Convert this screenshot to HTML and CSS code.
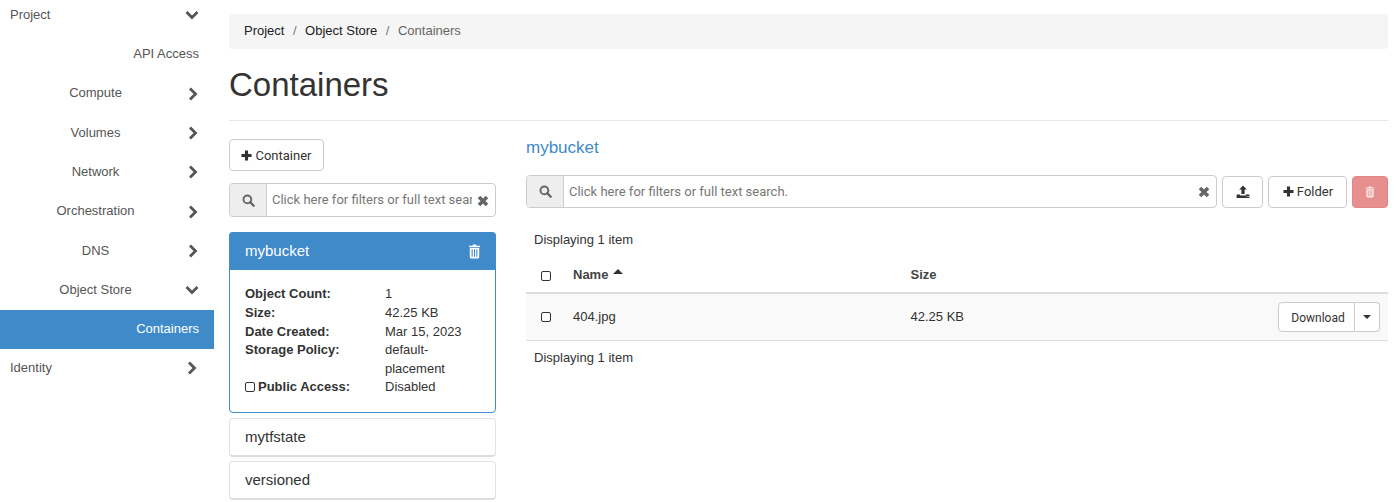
FILE: index.html
```html
<!DOCTYPE html>
<html lang="en">
<head>
  <meta charset="UTF-8">
  <title>Containers</title>
  <link rel="stylesheet" href="styles.css">
</head>
<body>
  <svg class="sprites" width="0" height="0">
    <symbol id="i-chev-right" viewBox="0 0 12 14"><path d="M3 1.5 8.5 7 3 12.5" fill="none" stroke="currentColor" stroke-width="2.8"/></symbol>
    <symbol id="i-chev-down" viewBox="0 0 14 12"><path d="M1.5 3 7 8.5 12.5 3" fill="none" stroke="currentColor" stroke-width="2.8"/></symbol>
    <symbol id="i-search" viewBox="0 0 14 14"><circle cx="5.8" cy="5.8" r="4.2" fill="none" stroke="currentColor" stroke-width="2.1"/><path d="M8.8 8.8 12.6 12.6" stroke="currentColor" stroke-width="2.5" stroke-linecap="round"/></symbol>
    <symbol id="i-times" viewBox="0 0 12 12"><path d="M2 2 10 10M10 2 2 10" stroke="currentColor" stroke-width="3.6"/></symbol>
    <symbol id="i-plus" viewBox="0 0 12 12"><path d="M6 .5V11.500M.5 6H11.500" stroke="currentColor" stroke-width="3.4"/></symbol>
    <symbol id="i-trash" viewBox="0 0 12 14"><path fill="currentColor" fill-rule="evenodd" d="M4 1.6 4.7.5h2.600L8 1.600h3.200v1.300H.8V1.600zM1.600 3.600h8.800v8.600c0 .8-.6 1.300-1.300 1.300H2.900c-.7 0-1.300-.5-1.300-1.300zM3.300 5v7h1V5zm2.200 0v7h1V5zm2.200 0v7h1V5z"/></symbol>
    <symbol id="i-upload" viewBox="0 0 14 14"><path fill="currentColor" fill-rule="evenodd" d="M7 .5 10.800 4.600H8.600V9H5.400V4.600H3.200zM.6 9.600h3.600V10.600h5.600V9.600h3.600V13H.6zM10.600 11v1h.8v-1zm1.300 0v1h.7v-1z"/></symbol>
  </svg>

  <nav class="sidebar">
    <a class="nav-top"><span>Project</span><svg class="chev-down"><use href="#i-chev-down"/></svg></a>
    <a class="nav-leaf">API Access</a>
    <a class="nav-sub"><span>Compute</span><svg class="chev"><use href="#i-chev-right"/></svg></a>
    <a class="nav-sub"><span>Volumes</span><svg class="chev"><use href="#i-chev-right"/></svg></a>
    <a class="nav-sub"><span>Network</span><svg class="chev"><use href="#i-chev-right"/></svg></a>
    <a class="nav-sub"><span>Orchestration</span><svg class="chev"><use href="#i-chev-right"/></svg></a>
    <a class="nav-sub"><span>DNS</span><svg class="chev"><use href="#i-chev-right"/></svg></a>
    <a class="nav-sub"><span>Object Store</span><svg class="chev-down"><use href="#i-chev-down"/></svg></a>
    <a class="nav-leaf active">Containers</a>
    <a class="nav-top"><span>Identity</span><svg class="chev"><use href="#i-chev-right"/></svg></a>
  </nav>

  <main class="content">
    <ol class="breadcrumb">
      <li>Project</li>
      <li class="sep">/</li>
      <li>Object Store</li>
      <li class="sep">/</li>
      <li class="current">Containers</li>
    </ol>
    <h1>Containers</h1>
    <hr>

    <div class="columns">
      <section class="left-col">
        <button class="btn btn-add"><svg class="ic-plus"><use href="#i-plus"/></svg>Container</button>
        <div class="search search-left">
          <span class="search-addon"><svg class="ic-search"><use href="#i-search"/></svg></span>
          <span class="search-field"><span class="search-text">Click here for filters or full text search.</span></span>
          <svg class="ic-times"><use href="#i-times"/></svg>
        </div>

        <div class="panel panel-active">
          <div class="panel-head"><span>mybucket</span><svg class="ic-trash"><use href="#i-trash"/></svg></div>
          <dl class="details">
            <dt>Object Count:</dt><dd>1</dd>
            <dt>Size:</dt><dd>42.25 KB</dd>
            <dt>Date Created:</dt><dd>Mar 15, 2023</dd>
            <dt>Storage Policy:</dt><dd>default-placement</dd>
            <dt class="public"><span class="check"></span>Public Access:</dt><dd>Disabled</dd>
          </dl>
        </div>
        <div class="panel panel-closed">mytfstate</div>
        <div class="panel panel-closed">versioned</div>
      </section>

      <section class="right-col">
        <a class="bucket-link">mybucket</a>
        <div class="toolbar">
          <div class="search search-right">
            <span class="search-addon"><svg class="ic-search"><use href="#i-search"/></svg></span>
            <span class="search-field"><span class="search-text">Click here for filters or full text search.</span></span>
            <svg class="ic-times"><use href="#i-times"/></svg>
          </div>
          <button class="btn btn-upload"><svg class="ic-upload"><use href="#i-upload"/></svg></button>
          <button class="btn btn-folder"><svg class="ic-plus"><use href="#i-plus"/></svg>Folder</button>
          <button class="btn btn-delete"><svg class="ic-trash-sm"><use href="#i-trash"/></svg></button>
        </div>

        <p class="count count-top">Displaying 1 item</p>
        <div class="table-row table-head">
          <span class="cell-check"><span class="check"></span></span>
          <span class="cell-name">Name <span class="sort-up"></span></span>
          <span class="cell-size">Size</span>
        </div>
        <div class="table-row table-item">
          <span class="cell-check"><span class="check"></span></span>
          <span class="cell-name">404.jpg</span>
          <span class="cell-size">42.25 KB</span>
          <span class="btn-group">
            <button class="btn btn-download">Download</button>
            <button class="btn btn-caret"><span class="caret"></span></button>
          </span>
        </div>
        <p class="count">Displaying 1 item</p>
      </section>
    </div>
  </main>
</body>
</html>
```

FILE: styles.css
```css
* { box-sizing: border-box; }
html, body { height: 100%; }
body {
  margin: 0;
  display: flex;
  overflow: hidden;
  background: #fff;
  color: #333;
  font-family: "Liberation Sans", Arial, sans-serif;
  font-size: 13px;
  line-height: 18.6px;
}
.sprites { position: absolute; }
svg { display: block; flex: none; }

/* sidebar */
.sidebar { width: 214px; flex: none; margin-top: -4.5px; }
.sidebar a { display: flex; align-items: center; height: 39.3px; color: #555; }
.nav-top { justify-content: space-between; padding: 0 16px 0 10px; }
.nav-leaf { justify-content: flex-end; padding-right: 15px; }
.sidebar .nav-leaf.active { background: #3f8ac9; color: #fff; padding-bottom: 1px; margin-bottom: -1px; }
.nav-sub { padding-right: 15px; }
.nav-sub span { width: 191px; text-align: center; flex: none; }
.nav-sub svg { margin-left: -4.5px; }
.chev { width: 12px; height: 14px; color: #555; }
.chev-down { width: 14px; height: 12px; color: #555; margin-right: -1px; }
.nav-sub .chev-down { margin-left: -6px; }

/* main */
.content { flex: 1; padding: 14px 8px 0 15px; min-width: 0; }
.breadcrumb {
  list-style: none;
  margin: 0;
  padding: 0 15px;
  height: 35px;
  display: flex;
  align-items: center;
  background: #f5f5f5;
  border-radius: 4px;
  color: #222;
}
.breadcrumb .sep { color: #777; padding: 0 8.5px; }
.breadcrumb .current { color: #666; }
h1 {
  margin: 15px 0 0;
  font-size: 33px;
  font-weight: 400;
  line-height: 41px;
  color: #333;
}
hr { border: 0; border-top: 1px solid #e6e6e6; margin: 15px 0 18px; }
.columns { display: flex; gap: 30px; }
.left-col { width: 267px; flex: none; }
.right-col { flex: 1; min-width: 0; }

/* buttons */
.btn {
  display: inline-flex;
  align-items: center;
  justify-content: center;
  height: 32px;
  padding: 0 12px;
  background: #fff;
  border: 1px solid #ccc;
  border-radius: 4px;
  color: #333;
  font-family: Roboto, sans-serif;
  font-size: 13px;
}
.btn-add { width: 95px; }
.ic-plus { width: 11px; height: 11px; margin-right: 3px; color: #333; }

/* search bars */
.search {
  display: flex;
  align-items: center;
  height: 33px;
  border: 1px solid #ccc;
  border-radius: 4px;
  background: #fff;
  font-family: Roboto, sans-serif;
  color: #777;
}
.search-addon {
  width: 37px;
  height: 100%;
  flex: none;
  display: flex;
  align-items: center;
  justify-content: center;
  background: #eee;
  border-right: 1px solid #ccc;
  border-radius: 3px 0 0 3px;
}
.ic-search { width: 13px; height: 13px; color: #666; }
.search-field { flex: 1; min-width: 0; overflow: hidden; white-space: nowrap; padding-left: 5px; }
.ic-times { width: 12px; height: 12px; color: #666; margin: 1px 6px 0 5px; }
.search-left { margin: 12px 0 15px; height: 34px; }
.search-right { flex: 1; min-width: 0; }
.search-right .search-field { padding-top: 1px; }

/* container panels */
.panel { border-radius: 4px; font-size: 15px; }
.panel-active { border: 1px solid #3f8ac9; margin-bottom: 5px; }
.panel-head {
  display: flex;
  justify-content: space-between;
  align-items: center;
  height: 38px;
  padding: 0 15px 0 16px;
  margin: -1px -1px 0;
  background: #3f8ac9;
  border-radius: 4px 4px 0 0;
  color: #fff;
}
.ic-trash { width: 13px; height: 15px; color: #fff; }
.details {
  display: grid;
  grid-template-columns: 140px 1fr;
  margin: 0;
  padding: 15.4px 15px 14.6px;
  font-size: 13px;
}
.details dt { font-weight: 700; color: #333; }
.details dd { margin: 0; width: 85px; }
.public { display: flex; align-items: center; gap: 3px; }
.public .check { margin-top: -1px; }
.check {
  display: inline-block;
  width: 10px;
  height: 10px;
  border: 1px solid #333;
  border-radius: 2px;
  background: #fff;
  flex: none;
}
.panel-closed {
  display: flex;
  align-items: center;
  height: 39px;
  margin-bottom: 4px;
  padding: 1px 15px 0;
  border: 1px solid #e3e3e3;
  border-bottom: 2px solid #ddd;
  color: #333;
}

/* right column */
.bucket-link {
  display: block;
  font-size: 17px;
  line-height: 20px;
  color: #3f8ac9;
  margin: -1px 0 17px;
}
.toolbar { display: flex; gap: 5px; align-items: center; }
.btn-upload { width: 41px; padding: 0; }
.ic-upload { width: 14px; height: 14px; color: #333; }
.btn-folder { width: 79px; padding: 0 0 0 1px; }
.btn-delete { width: 36px; padding: 0; background: #e78f8e; border-color: #e38684; }
.ic-trash-sm { width: 10px; height: 12px; color: #fff; opacity: .85; }
.count { margin: 0; padding: 8px; height: 34px; color: #333; }
.count-top { margin-top: 15px; height: 36px; }
.table-row { display: flex; align-items: center; }
.cell-check { width: 47px; padding-left: 15px; display: flex; }
.cell-name { width: 337.5px; }
.table-head { height: 35px; border-bottom: 2px solid #ddd; font-weight: 700; color: #444; }
.table-item { height: 47px; background: #f9f9f9; border-bottom: 1px solid #ddd; }
.cell-size { flex: 1; }
.sort-up {
  display: inline-block;
  border: 5px solid transparent;
  border-top: 0;
  border-bottom: 5px solid #333;
  vertical-align: 5px;
  margin-left: 1px;
}
.btn-group { display: flex; margin-right: 8px; }
.btn-download { width: 77px; height: 30px; border-radius: 4px 0 0 4px; padding: 2px 0 0 3px; font-size: 12px; }
.btn-caret { width: 25px; height: 30px; border-radius: 0 4px 4px 0; border-left: 0; padding: 0; }
.caret { border: 4px solid transparent; border-bottom: 0; border-top: 4px solid #333; }
```
